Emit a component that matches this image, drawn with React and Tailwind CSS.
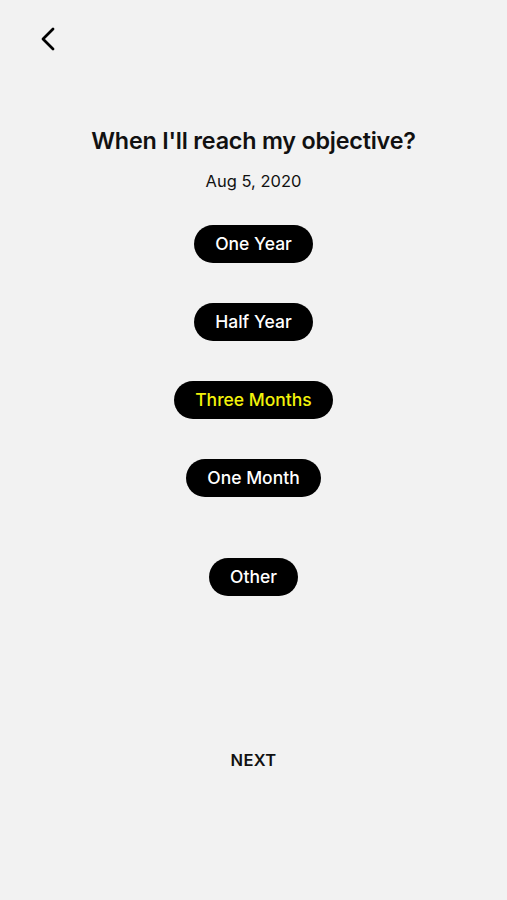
export default function App() {
  const opts = [
    { label: "One Year" },
    { label: "Half Year" },
    { label: "Three Months", active: true },
    { label: "One Month" },
  ];
  return (
    <div className="w-[507px] h-[900px] bg-[#f2f2f2] flex flex-col" style={{ fontFamily: "Inter, 'Noto Sans', sans-serif" }}>
      <div className="h-[77px] pl-[38px] pt-[26px]">
        <svg width="20" height="26" viewBox="0 0 20 26" fill="none">
          <path d="M15 3 L5 13 L15 23" stroke="#000" strokeWidth="2.8" strokeLinecap="round" strokeLinejoin="round" />
        </svg>
      </div>
      <div className="flex flex-col items-center">
        <h1 className="mt-[49px] text-[23.3px] leading-[30px] font-semibold text-[#111] tracking-[-0.2px]">When I'll reach my objective?</h1>
        <div className="mt-[14px] text-[16.5px] leading-[22px] text-[#111]">Aug 5, 2020</div>
        <div className="mt-[33px] flex flex-col items-center gap-[40px]">
          {opts.map((o) => (
            <button
              key={o.label}
              className={`h-[38px] px-[21px] rounded-full bg-black text-[17.5px] font-medium ${o.active ? "text-[#f2f20a]" : "text-white"}`}
            >
              {o.label}
            </button>
          ))}
        </div>
        <button className="mt-[61px] h-[38px] px-[21px] rounded-full bg-black text-white text-[17.5px] font-medium">Other</button>
        <div className="mt-[152px] text-[16.5px] font-semibold text-[#111] tracking-[0.3px]">NEXT</div>
      </div>
    </div>
  );
}
